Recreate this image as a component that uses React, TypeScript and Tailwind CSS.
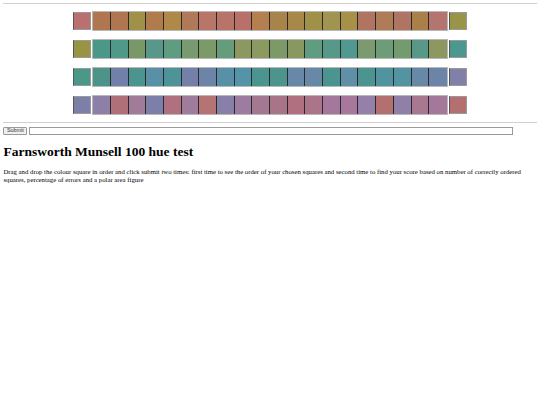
const rows: { first: string; caps: string[]; last: string }[] = [
  {
    first: '#b87070',
    caps: [
      '#b07650', '#b07652', '#a09048', '#b07c4c', '#b08848', '#b07a58', '#b87668', '#b87468', '#b87068', '#b48050',
      '#a8844a', '#a88848', '#a09048', '#a09450', '#a89048', '#b07460', '#b07c58', '#b07462', '#a88048', '#b47470',
    ],
    last: '#989448',
  },
  {
    first: '#989444',
    caps: [
      '#4c9888', '#509888', '#789868', '#589888', '#609c80', '#789a70', '#7c9a68', '#649c7c', '#8c9860', '#8a9a60',
      '#7c9a68', '#889860', '#609c80', '#589888', '#509890', '#7c9a70', '#6c9c78', '#749a70', '#589888', '#8c9860',
    ],
    last: '#4c9890',
  },
  {
    first: '#4c9888',
    caps: [
      '#4c9488', '#7080a8', '#4c9490', '#5890a8', '#4c9498', '#7480a8', '#6c84a8', '#5890a8', '#5494a8', '#4c9490',
      '#4c948c', '#6888a8', '#6888a8', '#4c9490', '#6090a8', '#4c9490', '#5094a0', '#5494a0', '#6888a8', '#6c84a8',
    ],
    last: '#8080a8',
  },
  {
    first: '#7c80a8',
    caps: [
      '#8c80a8', '#b07078', '#a07c98', '#7c80a8', '#b07080', '#a07c9c', '#b47474', '#8880a8', '#9c7ca0', '#a47890',
      '#a87488', '#b07080', '#ac7488', '#a4789c', '#a8789c', '#9480a8', '#b47070', '#9080a8', '#a87890', '#a47898',
    ],
    last: '#b47070',
  },
]

function FixedCap({ color }: { color: string }) {
  return (
    <div
      className="h-[17.7px] w-[18px] border-[0.6px] border-[#9a9a9a] border-l-[#555]"
      style={{ backgroundColor: color }}
    />
  )
}

export default function App() {
  return (
    <div className="min-h-[405px] bg-white px-[3.4px] pt-[3px] text-black" style={{ fontFamily: '"Liberation Serif", "Times New Roman", serif' }}>
      <hr className="border-0 border-t border-[#d0d0d0]" />

      <div className="mt-[8px] flex flex-col gap-[10.3px]">
        {rows.map((row, i) => (
          <div key={i} className="flex h-[17.7px] justify-center gap-[2px]">
            <FixedCap color={row.first} />
            <div className="flex outline outline-[0.6px] outline-[#b8b8b8]">
              {row.caps.map((c, j) => (
                <div
                  key={j}
                  className={j < row.caps.length - 1 ? 'h-[17.7px] w-[17.7px] border-r border-[#2a2a2a]' : 'h-[17.7px] w-[17.7px]'}
                  style={{ backgroundColor: c }}
                />
              ))}
            </div>
            <FixedCap color={row.last} />
          </div>
        ))}
      </div>

      <hr className="mt-[8px] border-0 border-t border-[#d0d0d0]" />

      <div className="mt-[4.5px] flex items-center gap-[2px]">
        <button
          className="flex h-[8px] w-[24px] items-center justify-center rounded-[1px] border-[0.6px] border-[#9a9a9a] bg-[#efefef] text-[5.4px] leading-none text-[#333]"
          style={{ fontFamily: '"Liberation Sans", Arial, sans-serif' }}
        >
          Submit
        </button>
        <input className="h-[8px] w-[484px] border-[0.6px] border-[#9a9a9a] bg-white text-[5.6px] outline-none" />
      </div>

      <h1 className="mt-[9px] text-[13.5px] font-bold leading-[15px]">Farnsworth Munsell 100 hue test</h1>

      <p className="mt-[9px] text-[6.75px] leading-[7.8px]">
        Drag and drop the colour square in order and click submit two times: first time to see the order of your chosen squares and second time to find your score based on number of correctly ordered squares, percentage of errors and a polar area figure
      </p>
    </div>
  )
}
